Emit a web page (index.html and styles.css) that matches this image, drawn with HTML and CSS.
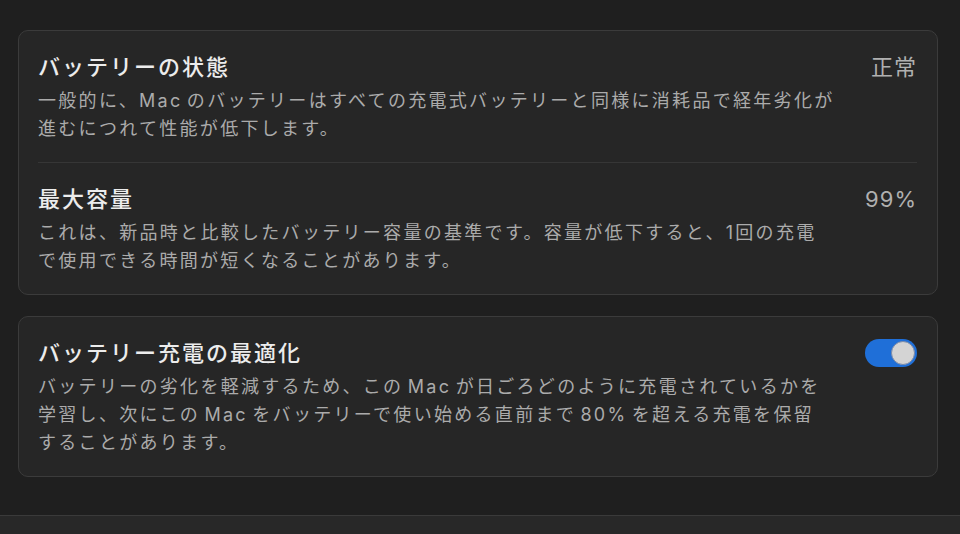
FILE: index.html
```html
<!DOCTYPE html>
<html lang="ja">
<head>
    <meta charset="UTF-8">
    <meta name="viewport" content="width=device-width, initial-scale=1.0">
    <title>バッテリー</title>
    <link rel="stylesheet" href="styles.css">
</head>
<body>
    <div class="content">
        <section class="card">
            <div class="row">
                <div class="text">
                    <h2>バッテリーの状態</h2>
                    <p>一般的に、Mac のバッテリーはすべての充電式バッテリーと同様に消耗品で経年劣化が<br>進むにつれて性能が低下します。</p>
                </div>
                <div class="value">正常</div>
            </div>
            <div class="row">
                <div class="text">
                    <h2>最大容量</h2>
                    <p>これは、新品時と比較したバッテリー容量の基準です。容量が低下すると、1回の充電<br>で使用できる時間が短くなることがあります。</p>
                </div>
                <div class="value">99%</div>
            </div>
        </section>

        <section class="card">
            <div class="row">
                <div class="text">
                    <h2>バッテリー充電の最適化</h2>
                    <p>バッテリーの劣化を軽減するため、この Mac が日ごろどのように充電されているかを<br>学習し、次にこの Mac をバッテリーで使い始める直前まで 80% を超える充電を保留<br>することがあります。</p>
                </div>
                <div class="toggle on"><span class="knob"></span></div>
            </div>
        </section>
    </div>

    <footer></footer>
</body>
</html>
```

FILE: styles.css
```css
body {
    font-family: "Inter", "Noto Sans CJK JP", sans-serif;
    margin: 0;
    padding: 0;
    background-color: #1f1f1f;
    color: #e6e6e6;
    height: 534px;
    overflow: hidden;
}
.content {
    padding: 30px 22px 0 18px;
}
.card {
    background-color: #262626;
    border: 1px solid #3b3b3b;
    border-radius: 10px;
    padding: 0 20px 0 19px;
    margin-bottom: 21px;
}
.row {
    display: flex;
    justify-content: space-between;
    align-items: flex-start;
    padding: 22px 0 19px;
}
.row + .row {
    border-top: 1px solid #363636;
}
.text h2 {
    margin: 0;
    font-size: 22px;
    line-height: 28px;
    font-weight: 500;
    letter-spacing: 2px;
    color: #ececec;
}
.text p {
    margin: 6px 0 0;
    font-size: 18px;
    line-height: 28px;
    letter-spacing: 2.3px;
    word-spacing: -3px;
    color: #ababab;
    white-space: nowrap;
}
.value {
    font-size: 22px;
    line-height: 28px;
    letter-spacing: 1px;
    color: #b0b0b0;
}
.toggle {
    width: 52px;
    height: 28px;
    border-radius: 14px;
    background-color: #3a3a3a;
    box-sizing: border-box;
    padding: 2px;
    display: flex;
}
.toggle.on {
    background-color: #1f6fd8;
    justify-content: flex-end;
}
.knob {
    width: 24px;
    height: 24px;
    border-radius: 50%;
    background-color: #d4d4d4;
    box-sizing: border-box;
    border: 1px solid #7a8aa8;
}
footer {
    position: fixed;
    left: 0;
    bottom: 0;
    width: 100%;
    height: 18px;
    background-color: #282828;
    border-top: 1px solid #3a3a3a;
}
```
